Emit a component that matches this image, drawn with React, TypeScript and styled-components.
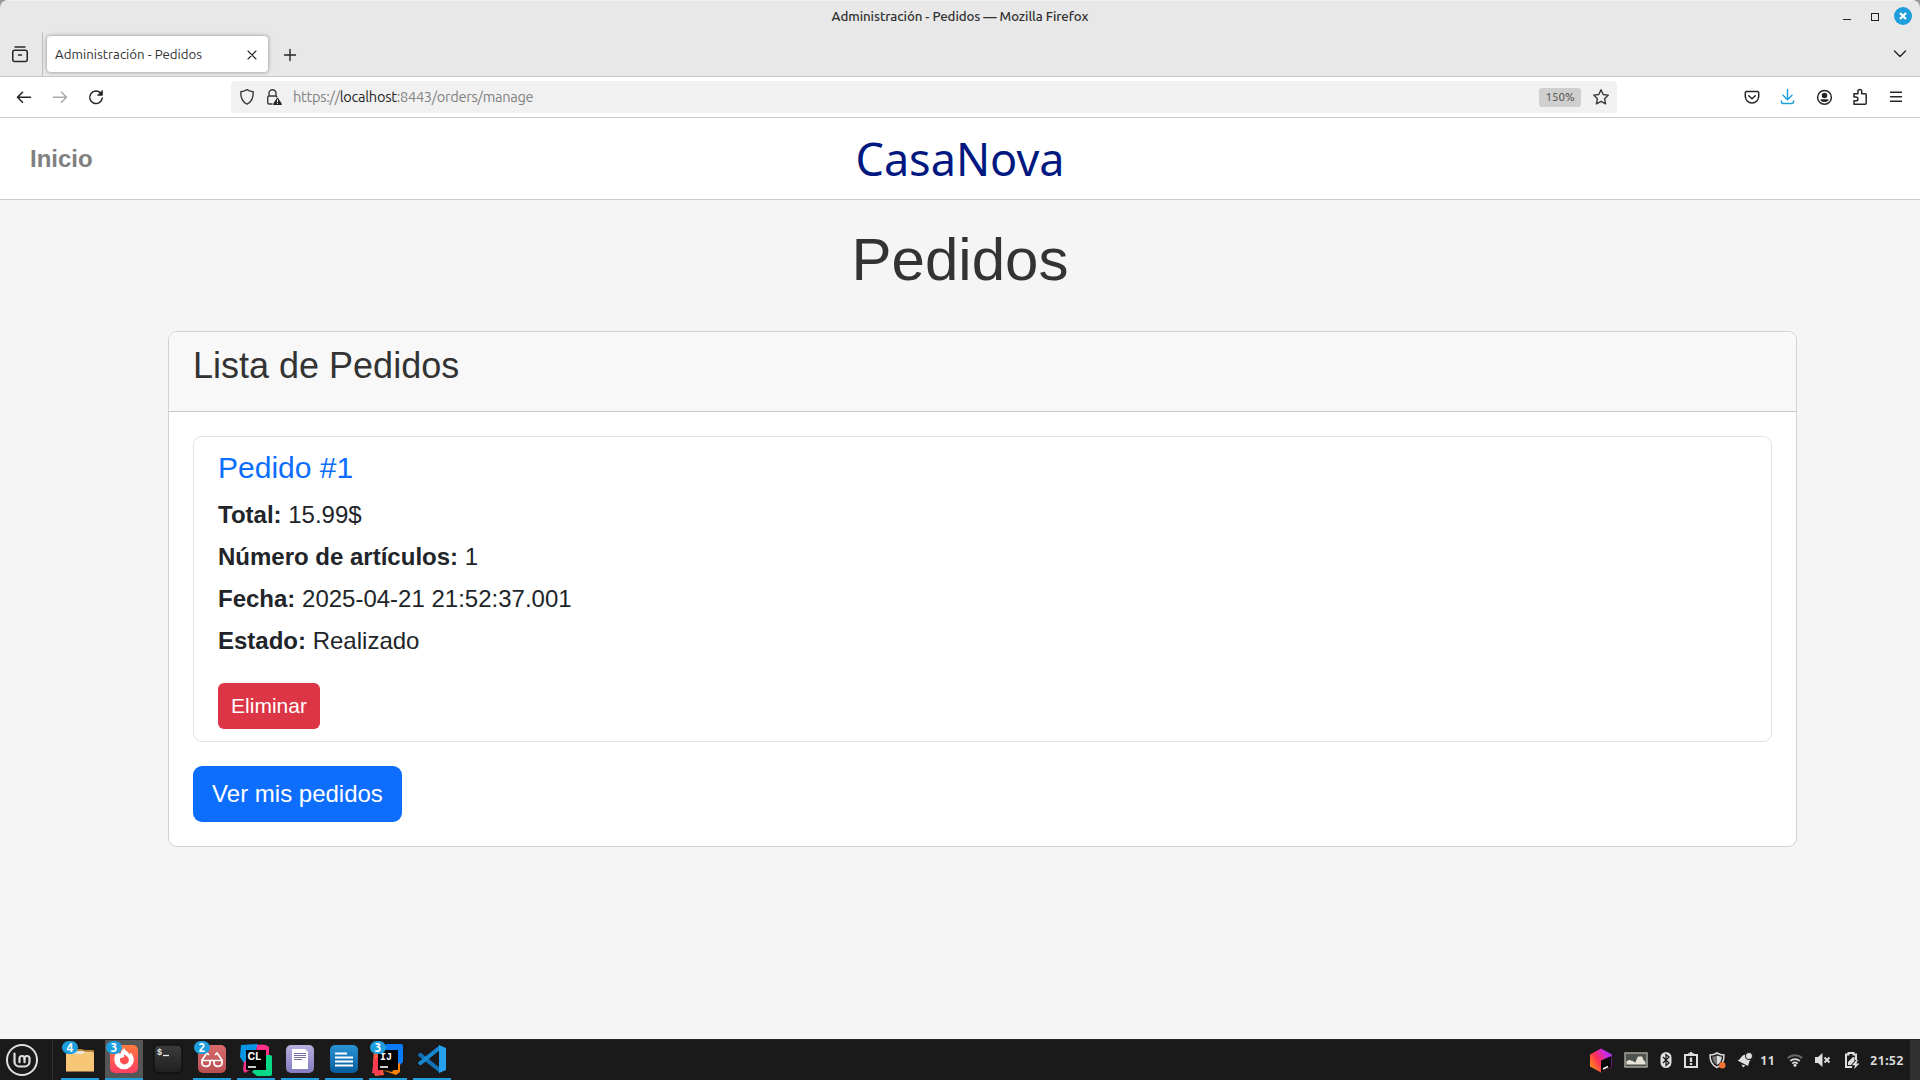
import React from "react";
import styled, { createGlobalStyle } from "styled-components";

const uiFont = `Ubuntu, "Noto Sans", "Open Sans", sans-serif`;
const pageFont = `"Liberation Sans", Arial, sans-serif`;

const GlobalStyle = createGlobalStyle`
  *, *::before, *::after { box-sizing: border-box; }
  html, body { margin: 0; padding: 0; background: #9a9a9a; overflow: hidden; }
  svg { display: block; flex: none; }
  h1, h2, h3, p { margin: 0; font-weight: 400; }
`;

const Screen = styled.div`
  width: 1920px;
  height: 1080px;
  display: flex;
  flex-direction: column;
  overflow: hidden;
`;

/* ---------- browser chrome ---------- */

const WindowTop = styled.header`
  height: 77px;
  flex: none;
  display: flex;
  flex-direction: column;
  background: #e8e8e8;
  border-top: 1px solid #f1f1f1;
  border-bottom: 1px solid #c9c9c9;
  border-radius: 8px 8px 0 0;
`;

const TitleBar = styled.div`
  height: 31px;
  flex: none;
  display: grid;
  grid-template-columns: 1fr auto 1fr;
  align-items: center;
`;

const WindowTitle = styled.div`
  grid-column: 2;
  font: 500 13.3px/20px ${uiFont};
  letter-spacing: -0.07px;
  color: #303030;
  white-space: nowrap;
`;

const WindowButtons = styled.div`
  display: flex;
  justify-content: flex-end;
  align-items: center;
  padding: 0 8px 1px 0;
`;

const TabStrip = styled.div`
  height: 44px;
  display: flex;
  align-items: stretch;
`;

const TabsOverview = styled.div`
  width: 43px;
  flex: none;
  display: flex;
  align-items: center;
  padding-left: 11px;
  border-right: 1px solid #bdbdbd;
`;

const Tab = styled.div`
  width: 221px;
  flex: none;
  height: 36px;
  margin: 4px 0 0 4px;
  padding: 1px 9px 0 8px;
  display: flex;
  align-items: center;
  justify-content: space-between;
  background: #fff;
  border-radius: 4px;
  box-shadow: 0 0 4px rgba(0, 0, 0, 0.4);
`;

const TabLabel = styled.span`
  padding-top: 1px;
  font: 400 13.3px/20px ${uiFont};
  letter-spacing: 0.01px;
  color: #303030;
  white-space: nowrap;
`;

const NewTab = styled.div`
  display: flex;
  align-items: center;
  padding: 1px 0 0 14px;
  flex: 1;
`;

const AllTabs = styled.div`
  display: flex;
  align-items: center;
  padding-right: 12px;
`;

const NavBar = styled.div`
  height: 41px;
  flex: none;
  display: flex;
  align-items: center;
  background: #fff;
  border-bottom: 1px solid #cbcbcb;
`;

const NavButtons = styled.div`
  width: 231px;
  flex: none;
  padding-left: 14px;
  display: flex;
  gap: 16px;
`;

const UrlBar = styled.div`
  width: 1386px;
  flex: none;
  height: 32px;
  display: flex;
  align-items: center;
  padding: 0 6px;
  border-radius: 4px;
  background: #f1f1f1;
`;

const UrlIcons = styled.div`
  display: flex;
  flex: none;
  gap: 7px;
  width: 56px;
`;

const UrlText = styled.div`
  flex: 1;
  font: 400 14.6px/22px ${uiFont};
  letter-spacing: -0.28px;
  color: #818181;
  white-space: nowrap;
`;

const UrlHost = styled.span`
  color: #262626;
`;

const ZoomBadge = styled.div`
  width: 42px;
  height: 19px;
  margin-right: 10px;
  border-radius: 3px;
  background: #cfcfcf;
  color: #4a4a4a;
  text-align: center;
  font: 400 11.5px/18px ${uiFont};
`;

const NavActions = styled.div`
  flex: 1;
  display: flex;
  justify-content: flex-end;
  gap: 16px;
  padding-right: 14px;
`;

/* ---------- web page ---------- */

const Page = styled.main`
  flex: 1;
  min-height: 0;
  background: #f5f5f5;
  font-family: ${pageFont};
  font-size: 24px;
  line-height: 36px;
  color: #212529;
`;

const SiteHeader = styled.div`
  height: 82px;
  display: grid;
  grid-template-columns: 1fr auto 1fr;
  align-items: center;
  padding: 0 30px;
  background: #fff;
  border-bottom: 1px solid #ccc;
`;

const HomeLink = styled.a`
  font-weight: 700;
  color: #808080;
`;

const Brand = styled.div`
  font: 400 45px/60px "Noto Sans", sans-serif;
  color: #001880;
`;

const PageTitle = styled.h1`
  margin: 24px 0 35px;
  font-size: 60px;
  line-height: 72px;
  text-align: center;
  color: #333;
`;

const Card = styled.section`
  width: 1629px;
  margin-left: 168px;
  border: 1px solid #d2d2d2;
  border-radius: 9px;
  background: #fff;
`;

const CardHeader = styled.div`
  height: 80px;
  padding: 12px 24px;
  background: #f8f8f8;
  border-bottom: 1px solid #c8c8c8;
  border-radius: 8px 8px 0 0;
`;

const CardTitle = styled.h2`
  font-size: 36px;
  line-height: 43px;
  color: #333;
`;

const CardBody = styled.div`
  padding: 24px;
  display: flex;
  flex-direction: column;
  align-items: flex-start;
  gap: 24px;
`;

const Order = styled.article`
  width: 100%;
  height: 306px;
  padding: 13px 24px 12px;
  border: 1px solid #dee2e6;
  border-radius: 9px;
  display: flex;
  flex-direction: column;
  align-items: flex-start;
`;

const OrderTitle = styled.h3`
  font-size: 30px;
  line-height: 36px;
  margin-bottom: 11px;
  color: #0d6efd;
`;

const OrderField = styled.p`
  margin-bottom: 6px;
`;

const Button = styled.button<{ $variant: "danger" | "primary" }>`
  border: 0;
  color: #fff;
  font-family: ${pageFont};
  text-align: center;
  padding: 0;
  ${(p) =>
    p.$variant === "danger"
      ? `width: 102px; height: 46px; margin-top: 18px; border-radius: 6px; background: #dc3545; font-size: 21px; line-height: 46px;`
      : `width: 209px; height: 56px; border-radius: 9px; background: #0d6efd; font-size: 24px; line-height: 56px;`}
`;

/* ---------- desktop panel ---------- */

const Taskbar = styled.footer`
  height: 41px;
  flex: none;
  display: flex;
  align-items: stretch;
  background: #1a1a1a;
  border-top: 1px solid #242424;
  font-family: ${uiFont};
`;

const StartMenu = styled.div`
  width: 53px;
  margin: 1px 8px 1px 0;
  padding-left: 5px;
  display: flex;
  align-items: center;
  border-right: 1px solid #333;
`;

const Apps = styled.div`
  display: flex;
  gap: 6px;
  flex: 1;
`;

const Launcher = styled.div<{ $active?: boolean; $running?: boolean }>`
  position: relative;
  width: 38px;
  display: flex;
  justify-content: center;
  padding-top: 4px;
  background: ${(p) => (p.$active ? "#565656" : "transparent")};
  border-bottom: 2px solid ${(p) => (p.$running ? "#1f9ede" : "transparent")};
`;

const Count = styled.span`
  position: absolute;
  left: 1px;
  top: 1px;
  width: 16px;
  height: 13px;
  border-radius: 7px;
  background: #1f9ede;
  color: #fff;
  font-size: 12px;
  font-weight: 600;
  line-height: 13px;
  text-align: center;
`;

const Tray = styled.div`
  display: flex;
  align-items: center;
`;

const TrayItem = styled.div<{ $gap: number }>`
  margin-left: ${(p) => p.$gap}px;
`;

const TrayText = styled.div<{ $gap: number; $width: number }>`
  margin-left: ${(p) => p.$gap}px;
  width: ${(p) => p.$width}px;
  padding-top: 1px;
  color: #dcdcdc;
  font-size: 13.3px;
  font-weight: 600;
  line-height: 20px;
  letter-spacing: 0.1px;
  white-space: nowrap;
`;

const ShowDesktop = styled.div`
  width: 10px;
  align-self: stretch;
  margin-left: 6px;
  background: #303030;
`;

/* ---------- icons ---------- */

const Icon = ({ w = 20, h = 20, color = "#262626", sw = 1.5, children }: any) => (
  <svg width={w} height={h} viewBox={`0 0 ${w} ${h}`} fill="none" stroke={color}
    strokeWidth={sw} strokeLinecap="round" strokeLinejoin="round">{children}</svg>
);

const MintLogo = () => (
  <Icon w={34} h={34} color="#dedede" sw={2}>
    <circle cx="17" cy="17" r="15" />
    <path d="M9.500 10.500v8.200a4.800 4.800 0 0 0 4.800 4.800h5.400a4.800 4.800 0 0 0 4.800-4.800v-3.200a2.500 2.500 0 0 0-5 0v3.700" strokeWidth="2.200" />
    <path d="M14.500 19.200v-3.700a2.500 2.500 0 0 1 5 0" strokeWidth="2.200" />
  </Icon>
);

const Folder = () => (
  <svg width="28" height="30" viewBox="0 0 28 30">
    <path d="M0 5h16l2 1h9a1 1 0 0 1 1 1v5H0z" fill="#b98236" />
    <path d="M1 7h16l2 1h7v4H1z" fill="#e8e4dc" />
    <path d="M0 10h16l3-1.500h9v19H0z" fill="#f7c777" />
  </svg>
);

const FirefoxIcon = () => (
  <svg width="30" height="30" viewBox="0 0 30 30">
    <defs><linearGradient id="ff" x1="0" y1="0" x2="0" y2="1"><stop stopColor="#ff7a3d" /><stop offset="1" stopColor="#ff3d63" /></linearGradient></defs>
    <rect x="1" y="1" width="28" height="28" rx="5" fill="url(#ff)" />
    <path d="M7 9.500 8 7.500l1.500 2 2.500-.3c.2-2.500 1.500-4 3.500-5 0 2.500 4.500 3.500 5 6.500l1-2.200c2 2 3.300 4.500 3.300 7.200A9.700 9.700 0 1 1 5.300 15.500c0-2.300.5-4.300 1.700-6z" fill="#fff" />
    <path d="M15.500 10.500c-.8 1-.7 1.600.2 2.200-1.300.2-1.800.8-2.600 1-1.400.5-2.200.4-2.200 2.200a4.500 4.500 0 1 0 9 0c0-2.400-2-3.500-4.400-5.400z" fill="#ff5050" />
  </svg>
);

const TerminalIcon = () => (
  <svg width="30" height="30" viewBox="0 0 30 30">
    <defs><linearGradient id="tm" x1="0" y1="0" x2="0" y2="1"><stop stopColor="#3b3b3b" /><stop offset="1" stopColor="#202020" /></linearGradient></defs>
    <rect x="1" y="1" width="28" height="28" rx="5" fill="url(#tm)" stroke="#090909" />
    <text x="4" y="11" fill="#eee" fontFamily="Liberation Mono, monospace" fontWeight="700" fontSize="8.500">$</text>
    <path d="M10 11.500h6" stroke="#eee" strokeWidth="1.300" />
  </svg>
);

const GlassesIcon = () => (
  <svg width="30" height="30" viewBox="0 0 30 30" fill="none">
    <defs><linearGradient id="gl" x1="0" y1="0" x2="0" y2="1"><stop stopColor="#d96a6a" /><stop offset="1" stopColor="#b94f52" /></linearGradient></defs>
    <rect x="1" y="1" width="28" height="28" rx="5" fill="url(#gl)" />
    <g stroke="#fff" strokeWidth="1.700" strokeLinejoin="round" strokeLinecap="round">
      <path d="M5 16 10 9l1.500 1.500M25 16l-5-7-1.500 1.500" />
      <path d="M5 16.500h8v2.500c0 2-1.500 3.300-4 3.300s-4-1.500-4-3.500zM17 16.500h8v2.300c0 2-1.500 3.500-4 3.500s-4-1.300-4-3.300z" />
      <path d="M13 17c1-1 3-1 4 0" />
    </g>
  </svg>
);

const ClionIcon = () => (
  <svg width="32" height="32" viewBox="0 0 32 32">
    <path d="M1 1 18 0 13 15 4 19 0 13z" fill="#0796e5" />
    <path d="M17 1c4-1 9-1 12 2v9L5 29l-2-3 1-8 12-8z" fill="#ff318c" />
    <path d="M12 28 27 11h3a2 2 0 0 1 2 2v17a2 2 0 0 1-2 2H17z" fill="#07d986" />
    <rect x="6" y="6" width="20" height="20" fill="#000" />
    <text x="7.500" y="16" fill="#fff" fontFamily="Inter, sans-serif" fontWeight="700" fontSize="10.500">CL</text>
    <path d="M8 23h8" stroke="#fff" strokeWidth="1.600" />
  </svg>
);

const DocIcon = () => (
  <svg width="30" height="30" viewBox="0 0 30 30">
    <defs><linearGradient id="dc" x1="0" y1="0" x2="0" y2="1"><stop stopColor="#b7b0df" /><stop offset="1" stopColor="#837cc0" /></linearGradient></defs>
    <rect x="1" y="1" width="28" height="28" rx="5" fill="url(#dc)" />
    <path d="M7 5h13l3 3v17H7z" fill="#fff" />
    <path d="M9 9.500h12M9 11.500h12M9 13.500h12M9 15.500h8" stroke="#77709f" strokeWidth="1" />
  </svg>
);

const LinesIcon = () => (
  <svg width="30" height="30" viewBox="0 0 30 30">
    <defs><linearGradient id="ln" x1="0" y1="0" x2="0" y2="1"><stop stopColor="#2a93d5" /><stop offset="1" stopColor="#075d9b" /></linearGradient></defs>
    <rect x="1" y="1" width="28" height="28" rx="5" fill="url(#ln)" />
    <path d="M6 9.500h12M6 13.500h18M6 17.500h18M6 21.500h18" stroke="#fff" strokeWidth="1.800" />
  </svg>
);

const IdeaIcon = () => (
  <svg width="32" height="32" viewBox="0 0 32 32">
    <path d="M2 4h16L10 22l2 9-9 1-2-12z" fill="#fe5a3c" />
    <path d="m2 15 8-4-1 20-9-2z" fill="#ff3b50" />
    <path d="M14 0h15a2 2 0 0 1 2 2v16l-8 8L12 6z" fill="#087cfa" />
    <path d="m10 26 10 2 8-10v10l-4 3z" fill="#ff8100" />
    <rect x="6" y="6" width="20" height="20" fill="#000" />
    <text x="8" y="16" fill="#fff" fontFamily="Liberation Mono, monospace" fontWeight="700" fontSize="10">IJ</text>
    <path d="M8 23h8" stroke="#fff" strokeWidth="1.600" />
  </svg>
);

const CodeIcon = () => (
  <svg width="30" height="30" viewBox="0 0 30 30">
    <path d="M1 10.500 3.500 8.500 23 24v5L1.500 12z" fill="#1272b8" />
    <path d="M1 19.500 3.500 21.500 23 6V1L1.500 18z" fill="#1787d0" />
    <path d="M22 1l7 3v22l-7 3z" fill="#25a1f0" />
  </svg>
);

const ToolboxIcon = () => (
  <svg width="22" height="25" viewBox="0 0 22 25">
    <defs>
      <linearGradient id="tb" x1="0" y1=".7" x2="1" y2="0"><stop stopColor="#ff8a20" /><stop offset=".35" stopColor="#ff2f55" /><stop offset=".7" stopColor="#c92be0" /><stop offset="1" stopColor="#8b3bf0" /></linearGradient>
    </defs>
    <path d="M11 0.500 22 6.500v12L11 24.500 0 18.500v-12z" fill="url(#tb)" />
    <path d="M11 12.500 21.500 8v10.500L11 24.500z" fill="#090909" />
    <path d="m13 21 5-2.500" stroke="#fff" strokeWidth="1.500" />
  </svg>
);

const SystemMonitor = () => (
  <svg width="24" height="16" viewBox="0 0 24 16">
    <rect x="1" y="1" width="22" height="14" fill="#4d524d" stroke="#a2a29d" strokeWidth="1.500" />
    <path d="M2.500 12.500V9l3-1 3 1 3 1.500 1-3 1.500-3h4l1.500 3.500 2 2v2.500z" fill="#e6e2d8" />
  </svg>
);

export default function App() {
  return (
    <Screen>
      <GlobalStyle />
      <WindowTop>
        <TitleBar>
          <WindowTitle>Administración - Pedidos — Mozilla Firefox</WindowTitle>
          <WindowButtons>
            <svg width="86" height="28" viewBox="0 0 86 28">
              <path d="M17 17.500h8" stroke="#222" />
              <rect x="45.500" y="11.500" width="7" height="7" fill="none" stroke="#222" />
              <circle cx="77" cy="14" r="9" fill="#1f9ede" />
              <path d="m74 11 6 6m0-6-6 6" stroke="#fff" strokeWidth="2.200" />
            </svg>
          </WindowButtons>
        </TitleBar>
        <TabStrip>
          <TabsOverview>
            <Icon w={18} h={20}>
              <path d="M4 3h10" /><rect x="1.750" y="6.250" width="14.500" height="11.250" rx="2" /><path d="M7.500 11h3" />
            </Icon>
          </TabsOverview>
          <Tab>
            <TabLabel>Administración - Pedidos</TabLabel>
            <Icon w={14} h={14} sw={1.1}><path d="m3 3 8 8m0-8-8 8" /></Icon>
          </Tab>
          <NewTab>
            <Icon w={16} h={16} sw={1.4}><path d="M8 2.500v11M2.500 8h11" /></Icon>
          </NewTab>
          <AllTabs>
            <Icon w={16} h={16} sw={1.4}><path d="m2.500 5 5.500 5.500L13.500 5" /></Icon>
          </AllTabs>
        </TabStrip>
      </WindowTop>

      <NavBar>
        <NavButtons>
          <Icon sw={1.6}><path d="M16.500 10.300H3.500M8.500 5.300l-5 5 5 5" /></Icon>
          <Icon color="#a9a9a9" sw={1.5}><path d="M3.500 10.300h13M11.500 5.300l5 5-5 5" /></Icon>
          <Icon sw={1.5}>
            <path d="M14.600 5.900A6.300 6.300 0 1 0 16.300 11" />
            <path d="M16.300 3.900v4.300h-4.300z" fill="#262626" strokeWidth="1" />
          </Icon>
        </NavButtons>
        <UrlBar>
          <UrlIcons>
            <Icon color="#3a3a3a" sw={1.4}>
              <path d="M10 2.700c2 1.300 4 2 6.200 2.100.3 5.500-1.500 10-6.200 12.400-4.700-2.400-6.500-6.900-6.200-12.400C6 4.700 8 4 10 2.700z" />
            </Icon>
            <Icon color="#3a3a3a" sw={1.4}>
              <path d="M8 17H5.200A1.500 1.500 0 0 1 3.700 15.500v-5A1.500 1.500 0 0 1 5.200 9H11.500a1.500 1.500 0 0 1 1.300.8M5 9V6.200a3.500 3.500 0 0 1 7 0v2.800" />
              <path d="m13.500 11.500 3.700 5.700H9.800z" fill="#262626" stroke="#262626" />
              <path d="M13.500 12.800v2M13.500 16.400v.1" stroke="#f1f1f1" strokeWidth="1" />
            </Icon>
          </UrlIcons>
          <UrlText>https://<UrlHost>localhost</UrlHost>:8443/orders/manage</UrlText>
          <ZoomBadge>150%</ZoomBadge>
          <Icon color="#3a3a3a" sw={1.4}>
            <path d="m10 2.800 2.200 4.700 5.100.6-3.700 3.600 1 5.100L10 14.300l-4.600 2.500 1-5.100L2.700 8.100l5.100-.6z" />
          </Icon>
        </UrlBar>
        <NavActions>
          <Icon>
            <path d="M4.500 4.500h11A1.200 1.200 0 0 1 16.700 5.700V9.300a6.700 6.700 0 0 1-13.400 0V5.700A1.200 1.200 0 0 1 4.500 4.500zM6.700 8.800 10 11.800l3.300-3" />
          </Icon>
          <Icon color="#1f9ede"><path d="M9.500 2.500v10M5 8.300l4.500 4.500L14 8.300M3.500 14v1a1.500 1.500 0 0 0 1.500 1.500h9a1.500 1.500 0 0 0 1.500-1.500v-1" /></Icon>
          <Icon>
            <circle cx="10.500" cy="10.400" r="6.900" />
            <circle cx="10.500" cy="8.500" r="2" fill="#262626" />
            <path d="M7.200 13h6.600c-1.300 1.700-5.300 1.700-6.600 0z" fill="#262626" />
          </Icon>
          <Icon>
            <path d="M4 17.300V13.800h2a1.900 1.900 0 0 0 0-3.800h-2V6.700h3.900V4.500a1.900 1.900 0 0 1 3.800 0v2.200h3.500a1 1 0 0 1 1 1v8.600a1 1 0 0 1-1 1z" />
          </Icon>
          <Icon sw={1.4}><path d="M4.500 5.300h11M4.500 9.800h11M4.500 14.300h11" /></Icon>
        </NavActions>
      </NavBar>

      <Page>
        <SiteHeader>
          <HomeLink>Inicio</HomeLink>
          <Brand>CasaNova</Brand>
        </SiteHeader>
        <PageTitle>Pedidos</PageTitle>
        <Card>
          <CardHeader><CardTitle>Lista de Pedidos</CardTitle></CardHeader>
          <CardBody>
            <Order>
              <OrderTitle>Pedido #1</OrderTitle>
              <OrderField><b>Total:</b> 15.99$</OrderField>
              <OrderField><b>Número de artículos:</b> 1</OrderField>
              <OrderField><b>Fecha:</b> 2025-04-21 21:52:37.001</OrderField>
              <OrderField><b>Estado:</b> Realizado</OrderField>
              <Button $variant="danger">Eliminar</Button>
            </Order>
            <Button $variant="primary">Ver mis pedidos</Button>
          </CardBody>
        </Card>
      </Page>

      <Taskbar>
        <StartMenu><MintLogo /></StartMenu>
        <Apps>
          <Launcher $running><Folder /><Count>4</Count></Launcher>
          <Launcher $running $active><FirefoxIcon /><Count>3</Count></Launcher>
          <Launcher><TerminalIcon /></Launcher>
          <Launcher $running><GlassesIcon /><Count>2</Count></Launcher>
          <Launcher $running><ClionIcon /></Launcher>
          <Launcher $running><DocIcon /></Launcher>
          <Launcher $running><LinesIcon /></Launcher>
          <Launcher $running><IdeaIcon /><Count>3</Count></Launcher>
          <Launcher $running><CodeIcon /></Launcher>
        </Apps>
        <Tray>
          <TrayItem $gap={0}><ToolboxIcon /></TrayItem>
          <TrayItem $gap={12}><SystemMonitor /></TrayItem>
          <TrayItem $gap={12}>
            <svg width="12" height="16" viewBox="0 0 12 16">
              <rect x="0.500" width="11" height="16" rx="5.500" fill="#dedede" />
              <path d="m3 5 6 6-3 2.500v-11L9 5l-6 6" fill="none" stroke="#1a1a1a" strokeWidth="1.200" />
            </svg>
          </TrayItem>
          <TrayItem $gap={11}>
            <svg width="16" height="16" viewBox="0 0 16 16" fill="none" stroke="#dedede" strokeWidth="2">
              <path d="M2 3h12v12H2z" /><path d="M5 2.500h6M8 0v2M8 5.500v4.500M8 11v2" strokeWidth="2.300" />
            </svg>
          </TrayItem>
          <TrayItem $gap={10}>
            <svg width="17" height="17" viewBox="0 0 17 17">
              <path d="M8 1c2 1.300 4.500 2 7 2 0 6-2.500 10.500-7 12.500C3.500 13.500 1 9 1 3c2.500 0 5-.7 7-2z" fill="none" stroke="#dedede" strokeWidth="1.500" />
              <path d="M8 3.500V13C5 11.500 3.500 8.500 3.200 4.800 5 4.700 6.600 4.200 8 3.500z" fill="#777" />
              <path d="M8 3.500V13c3-1.500 4.500-4.500 4.800-8.200C11 4.700 9.400 4.200 8 3.500z" fill="#dedede" />
              <circle cx="13.300" cy="13.300" r="3.200" fill="#f37335" />
            </svg>
          </TrayItem>
          <TrayItem $gap={11}>
            <svg width="16" height="16" viewBox="0 0 16 16" fill="#dedede">
              <path d="M.5 8.500C3.500 8 4 3 8.500 2.500l5 5.500c-1.800 1.500-1.500 3.500-2.500 6z" />
              <circle cx="12" cy="4" r="3.600" stroke="#1a1a1a" strokeWidth="1" />
              <path d="M4.500 12.500 8.500 13.500 6 15.500z" />
            </svg>
          </TrayItem>
          <TrayText $gap={7} $width={15}>11</TrayText>
          <TrayItem $gap={12}>
            <svg width="16" height="14" viewBox="0 0 16 14" fill="none" strokeWidth="2">
              <path d="M.8 5.200a10.300 10.300 0 0 1 14.400 0" stroke="#666" />
              <path d="M3.200 8a7 7 0 0 1 9.600 0M5.300 10.700a4 4 0 0 1 5.400 0" stroke="#dedede" strokeWidth="1.700" />
              <circle cx="8" cy="12.300" r="1.500" fill="#dedede" />
            </svg>
          </TrayItem>
          <TrayItem $gap={12}>
            <svg width="16" height="14" viewBox="0 0 16 14">
              <path d="M0 4h3L7.500 0v14L3 10H0z" fill="#dedede" />
              <path d="m9.500 4.500 5 5m0-5-5 5" stroke="#dedede" strokeWidth="1.900" />
            </svg>
          </TrayItem>
          <TrayItem $gap={14}>
            <svg width="15" height="17" viewBox="0 0 15 17">
              <path d="M7 15H1V2.500h2.500V1h5v1.500H11V8" fill="none" stroke="#dedede" strokeWidth="2" />
              <path d="m3 13 0-3 5-5 1.500 0v4l-3.500 4z" fill="#dedede" />
              <path d="M11.500 8 7 13.200h3L9 17l5.500-5.500h-3.200L13 8z" fill="#dedede" />
            </svg>
          </TrayItem>
          <TrayText $gap={10} $width={34}>21:52</TrayText>
          <ShowDesktop />
        </Tray>
      </Taskbar>
    </Screen>
  );
}
